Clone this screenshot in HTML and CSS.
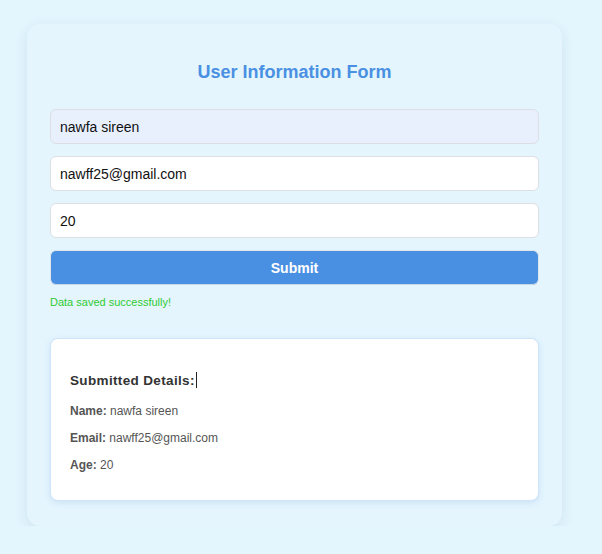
FILE: index.html
```html
<!DOCTYPE html>
<html>
<head>
<meta charset="utf-8">
<link rel="stylesheet" href="styles.css">
</head>
<body>
<div class="card">
  <h2 class="title">User Information Form</h2>
  <form class="form">
    <input class="field field-autofill" type="text" value="nawfa sireen">
    <input class="field" type="email" value="nawff25@gmail.com">
    <input class="field" type="text" value="20">
    <button class="submit" type="button">Submit</button>
  </form>
  <p class="success">Data saved successfully!</p>
  <div class="details">
    <h3 class="details-title">Submitted Details:<span class="caret"></span></h3>
    <p class="row"><strong>Name:</strong> nawfa sireen</p>
    <p class="row"><strong>Email:</strong> nawff25@gmail.com</p>
    <p class="row"><strong>Age:</strong> 20</p>
  </div>
</div>
</body>
</html>
```

FILE: styles.css
```css
html, body {
  margin: 0;
  padding: 0;
}
body {
  background: #e3f6fe;
  font-family: "Liberation Sans", Arial, sans-serif;
  padding: 24px 0 0 27px;
}
.card {
  width: 535px;
  height: 502px;
  box-sizing: border-box;
  background: #e4f5fe;
  border-radius: 13px;
  box-shadow: 0 4px 14px rgba(0, 40, 80, 0.09);
  padding: 37px 23px 0 23px;
}
.title {
  margin: 0 0 26px 0;
  text-align: center;
  color: #4a90e2;
  font-size: 18px;
  line-height: 22px;
  font-weight: bold;
}
.form {
  display: flex;
  flex-direction: column;
  gap: 12px;
}
.field {
  box-sizing: border-box;
  height: 35px;
  width: 100%;
  margin: 0;
  padding: 0 9px;
  border: 1px solid #dcdfe3;
  border-radius: 6px;
  background: #ffffff;
  font-family: "Liberation Sans", Arial, sans-serif;
  font-size: 14px;
  color: #111;
  outline: none;
}
.field-autofill {
  background: #e8f0fe;
}
.submit {
  box-sizing: border-box;
  height: 35px;
  width: 100%;
  margin: 0;
  border: 1px solid #dfe6ee;
  border-bottom-color: #c8d6e6;
  border-radius: 6px;
  background: #4a90e2;
  color: #fff;
  font-family: "Liberation Sans", Arial, sans-serif;
  font-size: 14px;
  font-weight: bold;
}
.success {
  margin: 10px 0 0 0;
  font-size: 11px;
  line-height: 14px;
  color: #2ecc2e;
}
.details {
  margin-top: 29px;
  box-sizing: border-box;
  height: 163px;
  background: #ffffff;
  border: 1px solid #cfe3fa;
  border-radius: 8px;
  box-shadow: 0 2px 6px rgba(70, 120, 180, 0.15);
  padding: 33px 19px 0 19px;
}
.details-title {
  margin: 0 0 15px 0;
  font-size: 13.5px;
  line-height: 17px;
  font-weight: bold;
  color: #333;
  letter-spacing: 0.35px;
}
.caret {
  display: inline-block;
  width: 1px;
  height: 16px;
  background: #222;
  vertical-align: -3px;
  margin-left: 1px;
}
.row {
  margin: 0 0 13px 0;
  font-size: 12px;
  line-height: 14px;
  color: #555;
}
.row strong {
  color: #555;
}
```
